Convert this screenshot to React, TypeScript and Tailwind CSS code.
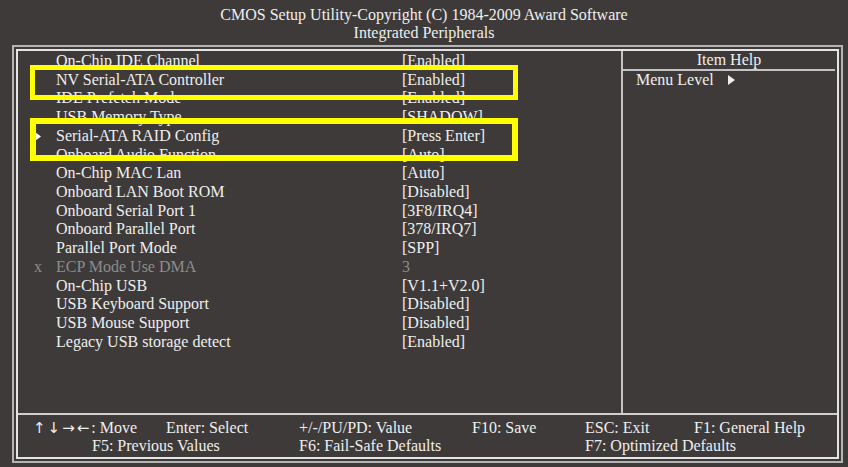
import React from "react";

type Row = { label: string; value: string; mark?: "arrow" | "x"; disabled?: boolean };

const rows: Row[] = [
  { label: "On-Chip IDE Channel", value: "[Enabled]" },
  { label: "NV Serial-ATA Controller", value: "[Enabled]" },
  { label: "IDE Prefetch Mode", value: "[Enabled]" },
  { label: "USB Memory Type", value: "[SHADOW]" },
  { label: "Serial-ATA RAID Config", value: "[Press Enter]", mark: "arrow" },
  { label: "Onboard Audio Function", value: "[Auto]" },
  { label: "On-Chip MAC Lan", value: "[Auto]" },
  { label: "Onboard LAN Boot ROM", value: "[Disabled]" },
  { label: "Onboard Serial Port 1", value: "[3F8/IRQ4]" },
  { label: "Onboard Parallel Port", value: "[378/IRQ7]" },
  { label: "Parallel Port Mode", value: "[SPP]" },
  { label: "ECP Mode Use DMA", value: "3", mark: "x", disabled: true },
  { label: "On-Chip USB", value: "[V1.1+V2.0]" },
  { label: "USB Keyboard Support", value: "[Disabled]" },
  { label: "USB Mouse Support", value: "[Disabled]" },
  { label: "Legacy USB storage detect", value: "[Enabled]" },
];

function RowLine({ r }: { r: Row }) {
  return (
    <div className={`flex h-[18.73px] items-center leading-[18.73px] ${r.disabled ? "text-[#8e8c8b]" : "text-[#efefef]"}`}>
      <div className="w-[38px] pl-[16px] flex items-center">
        {r.mark === "arrow" && (
          <svg width="6" height="9" viewBox="0 0 6 9" className="ml-[1px]">
            <polygon points="0,0 6,4.5 0,9" fill="#ffffff" />
          </svg>
        )}
        {r.mark === "x" && <span>x</span>}
      </div>
      <div className="w-[346px] whitespace-nowrap">{r.label}</div>
      <div className="whitespace-nowrap">{r.value}</div>
    </div>
  );
}

const arrowFont = { fontFamily: '"DejaVu Sans", sans-serif' };

export default function App() {
  return (
    <div
      className="relative w-[848px] h-[467px] bg-[#3d3a39] text-[#efefef] text-[16px] overflow-hidden"
      style={{ fontFamily: '"Liberation Serif", "Times New Roman", serif' }}
    >
      {/* header */}
      <div className="pt-[6px] text-center leading-[18px]">
        <div>CMOS Setup Utility-Copyright (C) 1984-2009 Award Software</div>
        <div>Integrated Peripherals</div>
      </div>

      {/* frame */}
      <div className="mt-[3px] ml-[12px] w-[831px] h-[418px] border-2 border-[#b4b4b4] p-[2px]">
        <div className="h-full border-2 border-[#e4e4e4] flex flex-col">
          <div className="flex h-[362px]">
            <div className="w-[603px] pt-[1px]">
              {rows.map((r) => (
                <RowLine key={r.label} r={r} />
              ))}
            </div>
            <div className="w-[2px] bg-[#c4c4c4]" />
            <div className="flex-1 pr-[2px]">
              <div className="h-[18px] leading-[18px] text-center">Item Help</div>
              <div className="h-[2px] bg-[#c4c4c4]" />
              <div className="h-[18px] leading-[18px] pl-[13px] flex items-center">
                <span>Menu Level</span>
                <svg width="7" height="10" viewBox="0 0 7 10" className="ml-[14px]">
                  <polygon points="0,0 7,5 0,10" fill="#efefef" />
                </svg>
              </div>
            </div>
          </div>
          <div className="h-[2px] bg-[#d0d0d0]" />
          <div className="pt-[4px] leading-[18px] whitespace-nowrap">
            <div className="flex pl-[15px]">
              <span className="w-[133px] flex items-center">
                <span className="text-[15px] tracking-[2px]" style={arrowFont}>↑↓→←</span>
                <span>: Move</span>
              </span>
              <span className="w-[133px]">Enter: Select</span>
              <span className="w-[173px]">+/-/PU/PD: Value</span>
              <span className="w-[113px]">F10: Save</span>
              <span className="w-[109px]">ESC: Exit</span>
              <span>F1: General Help</span>
            </div>
            <div className="flex pl-[74px]">
              <span className="w-[207px]">F5: Previous Values</span>
              <span className="w-[286px]">F6: Fail-Safe Defaults</span>
              <span>F7: Optimized Defaults</span>
            </div>
          </div>
        </div>
      </div>

      {/* yellow annotation boxes */}
      <div className="absolute left-[30px] top-[65px] w-[488px] h-[35px] border-[5px] border-[#ffff00]" />
      <div className="absolute left-[30px] top-[118px] w-[488px] h-[43px] border-[6px] border-[#ffff00]" />
    </div>
  );
}
